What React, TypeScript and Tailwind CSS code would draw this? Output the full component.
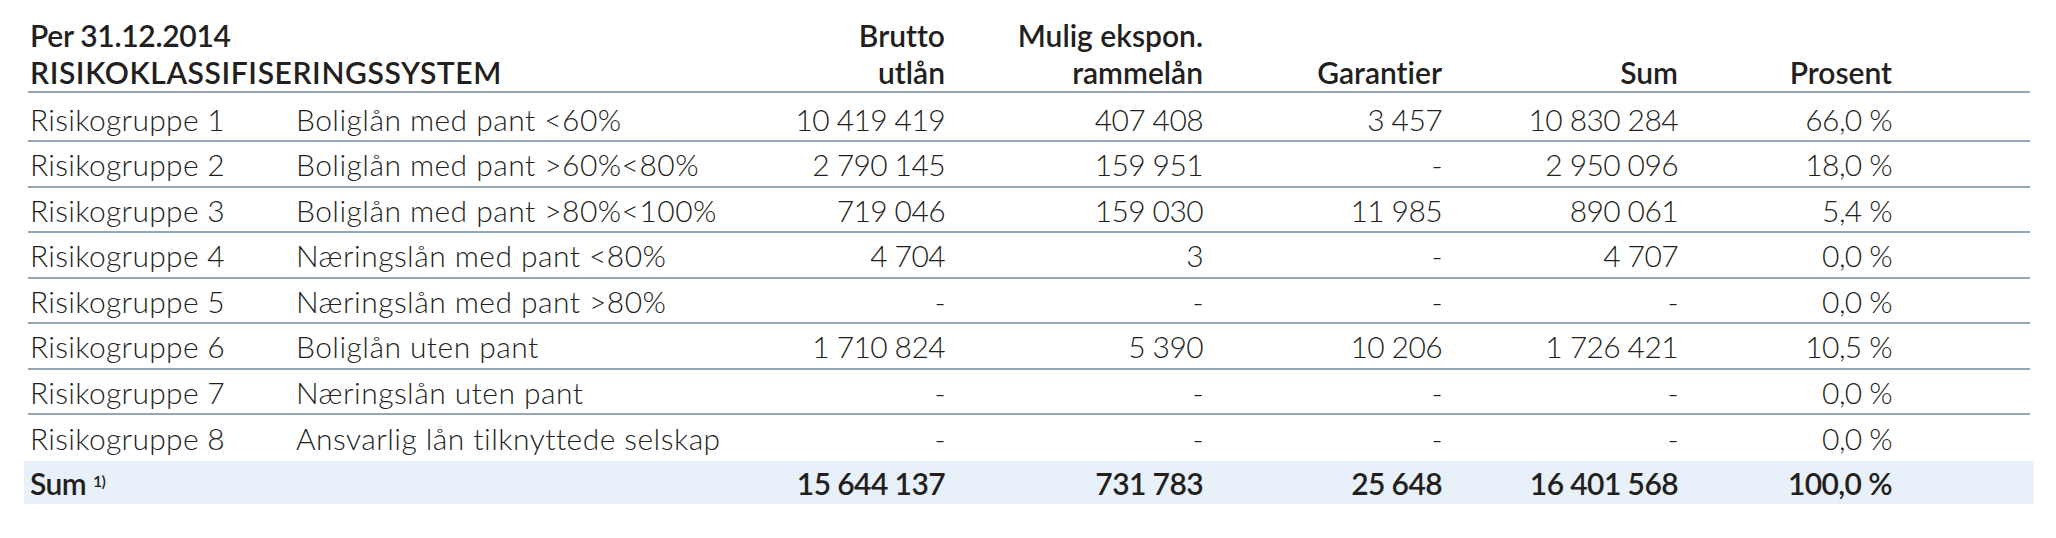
const rows = [
  ["Risikogruppe 1", "Boliglån med pant <60%", "10 419 419", "407 408", "3 457", "10 830 284", "66,0 %"],
  ["Risikogruppe 2", "Boliglån med pant >60%<80%", "2 790 145", "159 951", "-", "2 950 096", "18,0 %"],
  ["Risikogruppe 3", "Boliglån med pant >80%<100%", "719 046", "159 030", "11 985", "890 061", "5,4 %"],
  ["Risikogruppe 4", "Næringslån med pant <80%", "4 704", "3", "-", "4 707", "0,0 %"],
  ["Risikogruppe 5", "Næringslån med pant >80%", "-", "-", "-", "-", "0,0 %"],
  ["Risikogruppe 6", "Boliglån uten pant", "1 710 824", "5 390", "10 206", "1 726 421", "10,5 %"],
  ["Risikogruppe 7", "Næringslån uten pant", "-", "-", "-", "-", "0,0 %"],
  ["Risikogruppe 8", "Ansvarlig lån tilknyttede selskap", "-", "-", "-", "-", "0,0 %"],
];

const cols = "grid grid-cols-[266px_464px_185px_258px_239px_236px_214px_1fr] pl-[2px]";

export default function App() {
  return (
    <div className="min-h-screen bg-white text-[#231f20] font-['Lato','Liberation_Sans',sans-serif] text-[30px] [font-variant-ligatures:none]">
      <div className="ml-[28px] w-[2002px]">
        {/* header */}
        <div className={`${cols} pt-[17px] leading-[37px] font-semibold border-b-2 border-[#93a7b6]`}>
          <div className="col-span-2">
            <div className="tracking-[-0.01em]">Per 31.12.2014</div>
            <div className="tracking-[0.02em]">RISIKOKLASSIFISERINGSSYSTEM</div>
          </div>
          <div className="text-right">
            <div>Brutto</div>
            <div>utlån</div>
          </div>
          <div className="text-right">
            <div>Mulig ekspon.</div>
            <div>rammelån</div>
          </div>
          <div className="text-right self-end">Garantier</div>
          <div className="text-right self-end">Sum</div>
          <div className="text-right self-end">Prosent</div>
          <div />
        </div>

        {/* body */}
        {rows.map((r, i) => (
          <div
            key={r[0]}
            className={`${cols} items-center font-light ${
              i === 0 ? "h-[49px] pt-[4px]" : i === rows.length - 1 ? "h-[46px]" : "h-[45.5px]"
            } ${i < rows.length - 1 ? "border-b-2 border-[#93a7b6]" : ""}`}
          >
            <div className="tracking-[0.01em]">{r[0]}</div>
            <div className="tracking-[0.015em]">{r[1]}</div>
            {r.slice(2).map((v, j) => (
              <div key={j} className="text-right tracking-[-0.02em]">
                {v}
              </div>
            ))}
            <div />
          </div>
        ))}

        {/* sum */}
        <div className="-mx-[4px] px-[4px] bg-[#e8f1f9]">
          <div className={`${cols} h-[43px] items-center font-semibold tracking-[-0.02em]`}>
            <div>
              Sum <sup className="text-[16px] font-semibold">1)</sup>
            </div>
            <div />
            <div className="text-right">15 644 137</div>
            <div className="text-right">731 783</div>
            <div className="text-right">25 648</div>
            <div className="text-right">16 401 568</div>
            <div className="text-right">100,0 %</div>
            <div />
          </div>
        </div>
      </div>
    </div>
  );
}
